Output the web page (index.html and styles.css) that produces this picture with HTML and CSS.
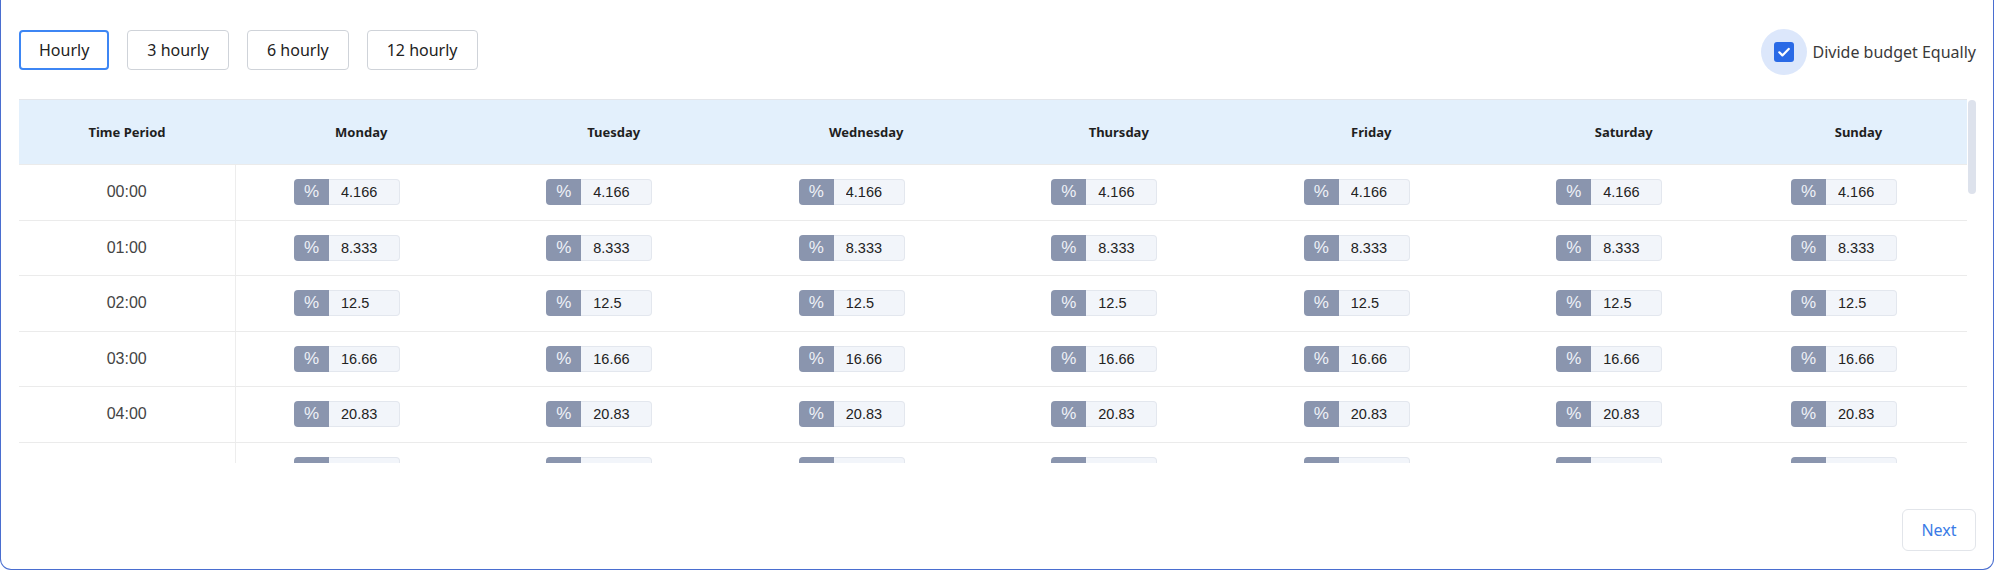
FILE: index.html
```html
<!DOCTYPE html>
<html lang="en">

<head>
    <meta charset="UTF-8">
    <meta name="viewport" content="width=device-width, initial-scale=1.0">
    <title>Budget Schedule</title>
    <link rel="stylesheet" href="styles.css">
</head>

<body>

    <div class="card">
        <div class="toolbar">
            <div class="periods">
                <button class="period active">Hourly</button>
                <button class="period">3 hourly</button>
                <button class="period">6 hourly</button>
                <button class="period">12 hourly</button>
            </div>
            <label class="divide">
                <span class="check-ring">
                    <span class="check-box">
                        <svg viewBox="0 0 20 20" width="20" height="20">
                            <path d="M5.3 10.3l3.1 3.1 6.3-6.5" fill="none" stroke="#fff" stroke-width="2.2" stroke-linecap="round" stroke-linejoin="round" />
                        </svg>
                    </span>
                </span>
                Divide budget Equally
            </label>
        </div>

        <div class="table-area">
            <div class="table-wrap">
                <table class="budget">
                    <colgroup>
                        <col class="col-time">
                        <col class="col-day">
                        <col class="col-day">
                        <col class="col-day">
                        <col class="col-day">
                        <col class="col-day">
                        <col class="col-day">
                        <col>
                    </colgroup>
                    <thead>
                        <tr>
                            <th>Time Period</th>
                            <th>Monday</th>
                            <th>Tuesday</th>
                            <th>Wednesday</th>
                            <th>Thursday</th>
                            <th>Friday</th>
                            <th>Saturday</th>
                            <th>Sunday</th>
                        </tr>
                    </thead>
                    <tbody></tbody>
                </table>
            </div>
            <!-- scrollbar thumb, drawn since the browser hides native ones -->
            <div class="scroll-thumb"></div>
        </div>

        <div class="footer">
            <button class="next">Next</button>
        </div>
    </div>

    <script>
        const tbody = document.querySelector('.budget tbody');

        function fmt(v) {
            const digits = 4 - String(Math.floor(v)).length;
            const f = Math.pow(10, digits);
            return String(Math.floor(v * f + 1e-9) / f);
        }

        for (let h = 0; h < 24; h++) {
            const tr = document.createElement('tr');
            const time = document.createElement('td');
            time.className = 'time';
            time.textContent = String(h).padStart(2, '0') + ':00';
            tr.appendChild(time);

            const value = fmt((h + 1) * 100 / 24);
            for (let d = 0; d < 7; d++) {
                const td = document.createElement('td');
                td.innerHTML = '<span class="pct"><span class="pct-addon">%</span>' +
                    '<input class="pct-input" type="text" value="' + value + '"></span>';
                tr.appendChild(td);
            }
            tbody.appendChild(tr);
        }
    </script>

</body>

</html>
```

FILE: styles.css
```css
body {
    margin: 0;
    font-family: "Noto Sans", Arial, sans-serif;
    color: #222;
    background: #fff;
}

.card {
    margin-right: 5px;
    height: 570px;
    box-sizing: border-box;
    border: 1px solid #4a6ed0;
    border-top: none;
    border-radius: 0 0 11px 11px;
    padding: 29px 17px 18px 18px;
    display: flex;
    flex-direction: column;
}

.toolbar {
    display: flex;
    align-items: flex-start;
}

.periods {
    display: flex;
    gap: 18px;
    margin-top: 1px;
}

.period {
    height: 40px;
    padding: 0 19px;
    border: 1px solid #cfd3d9;
    border-radius: 4px;
    background: #fff;
    font-family: "Noto Sans", Arial, sans-serif;
    font-size: 16px;
    color: #222;
    cursor: pointer;
}

.period.active {
    border: 2px solid #3d86f4;
    padding: 0 18px;
}

.divide {
    margin-left: auto;
    display: flex;
    align-items: center;
    gap: 6px;
    height: 46px;
    font-size: 16px;
    color: #3a3a3a;
    cursor: pointer;
}

.check-ring {
    width: 46px;
    height: 46px;
    border-radius: 50%;
    background: #dce7fb;
    display: flex;
    align-items: center;
    justify-content: center;
}

.check-box {
    width: 20px;
    height: 20px;
    border-radius: 3px;
    background: #2a6ae6;
    display: block;
}

.check-box svg {
    display: block;
}

.table-area {
    position: relative;
    margin-top: 24px;
    padding-right: 9px;
}

.table-wrap {
    height: 364px;
    overflow-y: auto;
    scrollbar-width: none;
}

.scroll-thumb {
    position: absolute;
    top: 1px;
    right: 0;
    width: 8px;
    height: 94px;
    border-radius: 4px;
    background: #dde2ec;
}

.budget {
    width: 100%;
    table-layout: fixed;
    border-collapse: collapse;
}

.col-time {
    width: 216px;
}

.col-day {
    width: 252.5px;
}

.budget th {
    height: 64px;
    padding: 0;
    background: #e3f0fc;
    border-top: 1px solid #e4e6ea;
    border-bottom: 1px solid #ebebeb;
    font-size: 13px;
    font-weight: 700;
    color: #1f1f1f;
    text-align: center;
}

.budget td {
    height: 54.5px;
    padding: 0;
    border-bottom: 1px solid #ebebeb;
    text-align: center;
}

.budget td.time {
    border-right: 1px solid #ededed;
    font-family: "Liberation Sans", Arial, sans-serif;
    font-size: 16px;
    color: #444;
}

.pct {
    display: inline-flex;
    height: 26px;
    margin-right: 29px;
    vertical-align: middle;
}

.pct-addon {
    width: 35px;
    display: flex;
    align-items: center;
    justify-content: center;
    background: #8a95ae;
    color: #eef1f7;
    border-radius: 4px 0 0 4px;
    font-family: "Liberation Sans", Arial, sans-serif;
    font-size: 17px;
}

.pct-input {
    width: 71px;
    box-sizing: border-box;
    border: 1px solid #e3e7ee;
    border-left: none;
    border-radius: 0 4px 4px 0;
    background: #f2f5fa;
    padding: 0 0 0 12px;
    font-family: "Liberation Sans", Arial, sans-serif;
    font-size: 14.5px;
    color: #222;
    outline: none;
}

.footer {
    display: flex;
    justify-content: flex-end;
    margin-top: 46px;
}

.next {
    width: 74px;
    height: 42px;
    border: 1px solid #e2e5ea;
    border-radius: 6px;
    background: #fff;
    color: #3a7be6;
    font-family: "Noto Sans", Arial, sans-serif;
    font-size: 16px;
    cursor: pointer;
}
```
